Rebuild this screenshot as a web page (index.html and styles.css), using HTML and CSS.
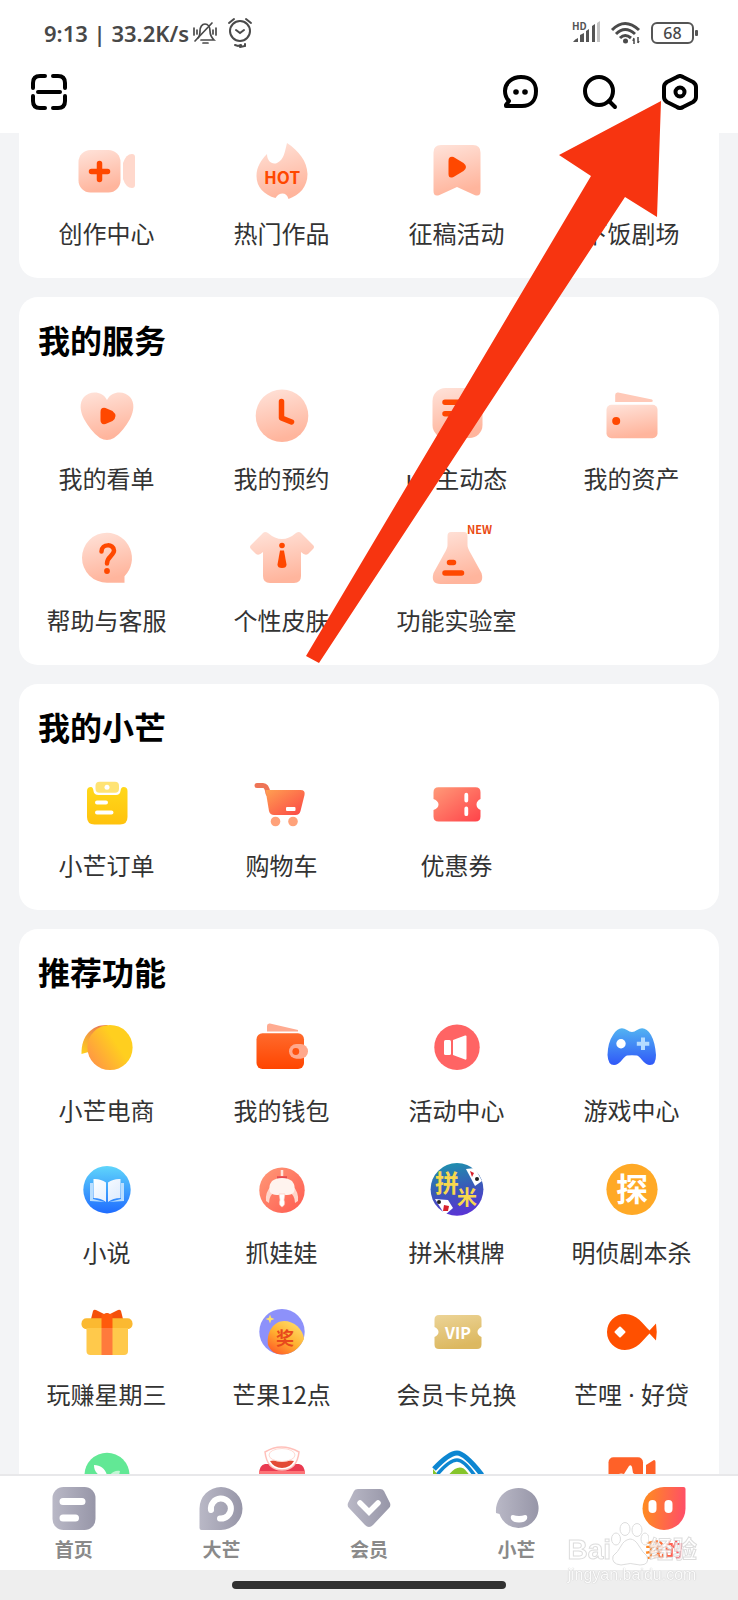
FILE: index.html
```html
<!DOCTYPE html>
<html lang="zh-CN">
<head>
<meta charset="utf-8">
<meta name="viewport" content="width=device-width, initial-scale=1">
<title>我的</title>
<link rel="stylesheet" href="styles.css">
</head>
<body>
<svg class="defs" aria-hidden="true">
  <defs>
    <linearGradient id="peach" x1="0" y1="0" x2="0.25" y2="1"><stop offset="0" stop-color="#ffe3da"/><stop offset="1" stop-color="#ffb59d"/></linearGradient>
    <linearGradient id="yellow" x1="0" y1="0" x2="0" y2="1"><stop offset="0" stop-color="#ffd81a"/><stop offset="1" stop-color="#ffc20d"/></linearGradient>
    <linearGradient id="cart" x1="0" y1="0" x2="1" y2="1"><stop offset="0" stop-color="#ffa052"/><stop offset="1" stop-color="#fb4545"/></linearGradient>
    <linearGradient id="coupon" x1="0" y1="0" x2="1" y2="1"><stop offset="0" stop-color="#ff9a78"/><stop offset="1" stop-color="#ff4249"/></linearGradient>
    <linearGradient id="mango" x1="0" y1="1" x2="0.9" y2="0.4"><stop offset="0" stop-color="#ff8a4c"/><stop offset="0.8" stop-color="#ffcf1f"/></linearGradient>
    <linearGradient id="beak" x1="0.6" y1="0" x2="0" y2="1"><stop offset="0" stop-color="#ea7c52"/><stop offset="1" stop-color="#ffd21c"/></linearGradient>
    <linearGradient id="wallet" x1="0" y1="0" x2="0" y2="1"><stop offset="0" stop-color="#ff6a2c"/><stop offset="1" stop-color="#ff4500"/></linearGradient>
    <linearGradient id="pad" x1="0" y1="0" x2="0" y2="1"><stop offset="0" stop-color="#52b3f2"/><stop offset="1" stop-color="#3058f8"/></linearGradient>
    <linearGradient id="book" x1="0" y1="0" x2="0" y2="1"><stop offset="0" stop-color="#5fd5fb"/><stop offset="1" stop-color="#1f6cff"/></linearGradient>
    <linearGradient id="page" x1="0" y1="0" x2="1" y2="1"><stop offset="0" stop-color="#fff"/><stop offset="1" stop-color="#dbeafe"/></linearGradient>
    <linearGradient id="claw" x1="0" y1="0" x2="1" y2="1"><stop offset="0" stop-color="#ff9a78"/><stop offset="1" stop-color="#ff5a50"/></linearGradient>
    <linearGradient id="chess" x1="0.4" y1="0" x2="0.6" y2="1"><stop offset="0" stop-color="#1f8fae"/><stop offset="0.5" stop-color="#3a58b8"/><stop offset="1" stop-color="#5b33d6"/></linearGradient>
    <linearGradient id="prize" x1="0.8" y1="0" x2="0.1" y2="1"><stop offset="0" stop-color="#ffdf6a"/><stop offset="0.5" stop-color="#ffb030"/><stop offset="1" stop-color="#ff5426"/></linearGradient>
    <linearGradient id="gold" x1="0" y1="0" x2="0.3" y2="1"><stop offset="0" stop-color="#ecd497"/><stop offset="1" stop-color="#dcb860"/></linearGradient>
    <linearGradient id="grey" x1="0" y1="0" x2="1" y2="0"><stop offset="0" stop-color="#b9b8c6"/><stop offset="1" stop-color="#9796a8"/></linearGradient>
    <linearGradient id="hot" x1="0" y1="0.4" x2="1" y2="0.5"><stop offset="0" stop-color="#ff8c1f"/><stop offset="1" stop-color="#ff4e68"/></linearGradient>
  </defs>
</svg>

<div class="status">
  <div class="status-side">
    <span class="status-text">9:13 | 33.2K/s</span>
    <svg class="bell" viewBox="0 0 24 24"><g fill="none" stroke="#4a4a4a" stroke-width="1.7" stroke-linecap="round"><path d="M5 17c2-2 2-4 2-7 0-4 2-7 5-7s5 3 5 7c0 4 1 6 4 9H8"/><path d="M2 20 19 2M10 22h5M1 7v7M4 9v4M20 9v4M23 7v7"/></g></svg>
    <svg class="alarm" viewBox="0 0 26 32"><g fill="none" stroke="#4a4a4a" stroke-width="2" stroke-linecap="round"><circle cx="13" cy="14" r="10"/><path d="m9 13 4 3 4-3M2 6l5-4M24 6l-5-4"/><path d="M8 28l3 1 3-1M13 30l5-1 0-2" stroke-width="2"/></g></svg>
  </div>
  <div class="status-side">
    <svg class="signal" viewBox="0 0 30 24"><text class="hd" x="1" y="9">HD</text><g fill="#555"><path d="M2 21q2-3 5-4v4zM9 14l4-2v9H9zM15 10l3-2v13h-3zM21 5l3-2v18h-3z"/><path fill="#c4c4c4" d="M26 2l3-2v21h-3z"/></g></svg>
    <svg class="wifi" viewBox="0 0 30 24"><g fill="none" stroke="#4a4a4a" stroke-width="3"><path d="M1 9q13-13 27 0M5 13q9-9 19 0M9 17q5-5 11 0"/></g><circle cx="14.500" cy="20" r="2.500" fill="#4a4a4a"/><path d="M23 18v5M27 16v6M22 20l1-3M27 22l1-2" stroke="#4a4a4a" stroke-width="1.500"/></svg>
    <span class="battery">68</span>
  </div>
</div>

<header class="toolbar">
  <button class="tool" type="button" aria-label="扫一扫"><svg viewBox="0 0 36 36"><path d="M2 14V9q0-7 7-7h5M22 2h5q7 0 7 7v5M34 22v5q0 7-7 7h-5M14 34H9q-7 0-7-7v-5M7 18h22"/></svg></button>
  <div class="tools">
    <button class="tool" type="button" aria-label="消息"><svg viewBox="0 0 36 36"><path d="M4 32h16c9 0 14-6 14-15C34 8 28 3 19 3S3 9 3 17c0 4 1 7 4 10l-3 4z"/><circle class="dot" cx="14" cy="18" r="2.800"/><circle class="dot" cx="23" cy="18" r="2.800"/></svg></button>
    <button class="tool" type="button" aria-label="搜索"><svg viewBox="0 0 36 36"><circle cx="17" cy="17" r="14"/><path d="m27 27 6 6"/></svg></button>
    <button class="tool" type="button" aria-label="设置"><svg viewBox="0 0 36 36"><path d="M15 3q3-2 6 0l10 5q3 2 3 5v10q0 3-3 5l-10 5q-3 2-6 0L5 28q-3-2-3-5V13q0-3 3-5z"/><circle cx="18" cy="18" r="4.500"/></svg></button>
  </div>
</header>

<main class="content">
  <section class="card card-first">
    <div class="grid">
      <a class="item" href="#"><svg viewBox="0 0 60 60"><rect x="1.500" y="9" width="42" height="42.500" rx="12" fill="url(#peach)"/><path d="M46 22q3-9 9-9 3 0 3 3v28q0 3-3 3-6 0-9-9z" fill="#ffd8cc"/><path d="M22.500 22.500v16M14.500 30.500h16" class="mark"/></svg><span>创作中心</span></a>
      <a class="item" href="#"><svg viewBox="0 0 60 60"><path d="M15 13c0 7 5 11 10 9 7-3 8-12 10-20 12 8 20 18 20.500 31 0 13-8 21-19 25-2-7-9-7-13-1C12 54 4.500 46 4.500 35 4.500 26 9 19 15 13z" fill="url(#peach)"/><text class="hot-text" x="30" y="43">HOT</text></svg><span>热门作品</span></a>
      <a class="item" href="#"><svg viewBox="0 0 60 60"><path d="M14 4h32q7.500 0 7.500 7.500V50q0 6-6 4L30 46 12.500 54q-6 2-6-4V11.500Q6.500 4 14 4z" fill="url(#peach)"/><path d="M21.500 20q0-5 5-4l10 6q5 4 0 8l-10 6q-5 2-5-3z" fill="#ff4800"/></svg><span>征稿活动</span></a>
      <a class="item" href="#"><svg viewBox="0 0 60 60"></svg><span>下饭剧场</span></a>
    </div>
  </section>

  <section class="card">
    <h2>我的服务</h2>
    <div class="grid">
      <a class="item" href="#"><svg viewBox="0 0 60 60"><path d="M30 14C35 4 48 5 53 11c5 6 4 14 0 22-4 7-9 14-16 19q-7 4-14 0C16 47 11 40 7 33 3 25 2 17 7 11 12 5 25 4 30 14z" fill="url(#peach)"/><path d="M23.500 26q0-5 5-4l7 3q6 5 0 10l-7 3q-5 1-5-4z" fill="#ff4800"/></svg><span>我的看单</span></a>
      <a class="item" href="#"><svg viewBox="0 0 60 60"><circle cx="30" cy="29.700" r="26.300" fill="url(#peach)"/><path class="mark" d="M29.500 15.500V32l10 4"/></svg><span>我的预约</span></a>
      <a class="item" href="#"><svg viewBox="0 0 60 60"><rect x="5.500" y="2" width="50" height="50" rx="13" fill="url(#peach)"/><path class="mark" d="M18 16.300h22M18 27.700h22"/></svg><span>up主动态</span></a>
      <a class="item" href="#"><svg viewBox="0 0 60 60"><path d="M13.200 9q0-3 3-2.500L50 13.500q2 2-1 2.500H13.200z" fill="#ffc9b8"/><rect x="4.500" y="18.700" width="51" height="33.600" rx="5" fill="url(#peach)"/><circle cx="14.200" cy="35" r="4" fill="#ff4800"/></svg><span>我的资产</span></a>
      <a class="item" href="#"><svg viewBox="0 0 60 60"><path d="M30 4.700a25.500 25.500 0 0 1 17.500 43.500v6.500H30a25 25 0 0 1 0-50z" fill="url(#peach)"/><path d="M24.500 23.500c0-8 12.500-8 12.500-1 0 5-7 6-7 13" fill="none" stroke="#ff4800" stroke-width="4.500" stroke-linecap="round"/><circle cx="30" cy="43" r="2.900" fill="#ff4800"/></svg><span>帮助与客服</span></a>
      <a class="item" href="#"><svg viewBox="0 0 60 60"><path d="M11 5q2-2 5 0 14 12 28 0 3-2 5 0l12 12q2 2 0 4l-5 5q-3 2-7-2v24q0 7-7 7H18q-7 0-7-7V24q-4 4-7 2l-5-5q-2-2 0-4z" fill="url(#peach)"/><circle cx="30" cy="17.500" r="2.800" fill="#ff4800"/><path d="M28 22.500h4l2.500 14q0 3.500-4.500 3.500t-4.500-3.500z" fill="#ff4800"/></svg><span>个性皮肤</span></a>
      <a class="item" href="#"><svg viewBox="0 0 60 60"><path d="M24 4h13q3.500 0 3.500 4v9q0 3 3 8l11 20q3 11-7 11h-34q-10 0-7-11l11-20q3-5 3-8V8q0-4 3.500-4z" fill="url(#peach)"/><path class="mark" d="M22.500 34.500h4M18 45h16.500"/><text class="new-text" x="40" y="6">NEW</text></svg><span>功能实验室</span></a>
    </div>
  </section>

  <section class="card">
    <h2>我的小芒</h2>
    <div class="grid">
      <a class="item" href="#"><svg viewBox="0 0 60 60"><path d="M10 18q0-4 4-4 2 0 2.500 4t5 4h17.500q4 0 4.500-4t3-4q4 0 4 4v26q0 7.500-7.500 7.500H17.500Q10 51.500 10 44z" fill="url(#yellow)"/><rect x="18.500" y="8.700" width="23.500" height="11" rx="4" fill="#ffe373"/><circle cx="30" cy="14.300" r="2.500" fill="#fff"/><path d="M20 29.500h9M20 39.500h14.500" stroke="#fff" stroke-width="4" stroke-linecap="round"/></svg><span>小芒订单</span></a>
      <a class="item" href="#"><svg viewBox="0 0 60 60"><path d="M5 12.500h6q4 0 5 8" fill="none" stroke="#ee7456" stroke-width="5" stroke-linecap="round"/><path d="M13.500 17h35q5 0 4 5l-4 16q-1 4-5 4H22q-4 0-5-4z" fill="url(#cart)"/><rect x="34" y="34" width="9.500" height="4" rx="1" fill="#fff"/><circle cx="23.500" cy="48.500" r="4.800" fill="#ffa27a"/><circle cx="41" cy="48.500" r="4.800" fill="#ffa27a"/></svg><span>购物车</span></a>
      <a class="item" href="#"><svg viewBox="0 0 60 60"><path d="M11.500 14.300h37q5 0 5 5V26q-4 2-4 5.500t4 5.500v6.500q0 5-5 5h-37q-5 0-5-5V37q5-2 5-5.500T6.500 26v-6.700q0-5 5-5z" fill="url(#coupon)"/><path d="M39.300 21.700v5.800M39.300 35.500v5.700" stroke="#fff" stroke-width="3.800" stroke-linecap="round"/></svg><span>优惠券</span></a>
    </div>
  </section>

  <section class="card card-last">
    <h2>推荐功能</h2>
    <div class="grid">
      <a class="item" href="#"><svg viewBox="0 0 60 60"><path d="M31 7C16 6 4 17 4.500 36l7-2z" fill="url(#beak)"/><circle cx="33" cy="29.500" r="22.600" fill="url(#mango)"/></svg><span>小芒电商</span></a>
      <a class="item" href="#"><svg viewBox="0 0 60 60"><path d="M15 8q0-3 3-2.500L46 12v1.500H15z" fill="#ffab91"/><rect x="4.500" y="15.300" width="47.500" height="35.700" rx="6" fill="url(#wallet)"/><rect x="37" y="26" width="19" height="14.700" rx="7.300" fill="#ffa88c"/><circle cx="43.800" cy="33.500" r="3.400" fill="#ff5310"/></svg><span>我的钱包</span></a>
      <a class="item" href="#"><svg viewBox="0 0 60 60"><circle cx="30" cy="29.300" r="22.700" fill="#ff6464"/><rect x="17" y="22" width="7" height="15" rx="1.500" fill="#fff"/><path d="M26 22l12-4.500q1.500-.5 1.500 1v22q0 1.500-1.500 1L26 37z" fill="#fff"/></svg><span>活动中心</span></a>
      <a class="item" href="#"><svg viewBox="0 0 60 60"><path d="M11 17q6-10 14-5 5 4 10 0 8-5 14 5 4 7 5 20 0 10-6 10-4 0-8-5-3-4-5-4.500-5-.500-10 0-2 .5-5 4.500-4 5-8 5-6 0-6.500-10Q6 24 11 17z" fill="url(#pad)"/><circle cx="19" cy="25.700" r="4.700" fill="#fff"/><path d="M41 19.500V32M34.800 25.700h12.500" stroke="#b5dcff" stroke-width="4"/></svg><span>游戏中心</span></a>
      <a class="item" href="#"><svg viewBox="0 0 60 60"><circle cx="30" cy="29.700" r="23.700" fill="url(#book)"/><path d="M13 23h3v16l12 3-15-1zM47 23h-3v16l-12 3 15-1z" fill="#b8deff"/><path d="M16.500 19q7-.500 12.500 3.500V42q-5-4-12.500-4zM43.500 19q-7-.5-12.500 3.500V42q5-4 12.500-4z" fill="url(#page)"/></svg><span>小说</span></a>
      <a class="item" href="#"><svg viewBox="0 0 60 60"><circle cx="30" cy="30.300" r="22.700" fill="url(#claw)"/><path d="M30 10v6" stroke="#ffe5dc" stroke-width="2.500"/><path d="M25 17.500h10" stroke="#e6484e" stroke-width="2.500"/><path d="M20 25q-7 7-6 16l3 2q0-8 6-11zM40 25q7 7 6 16l-3 2q0-8-6-11z" fill="#ffd5ca"/><path d="M20 21q4-3 10-3t10 3q4 5 2 11-2 3-7 3H25q-5 0-7-3-2-6 2-11z" fill="#fff3ee"/><path d="M27 34h6l-1 6q2 5-2 7-4-2-2-7z" fill="#fff" stroke="#ffc5b6" stroke-width=".6"/></svg><span>抓娃娃</span></a>
      <a class="item" href="#"><svg viewBox="0 0 60 60"><circle cx="30" cy="29.300" r="26.400" fill="url(#chess)"/><path d="M39 9l9-1 7 13-7 5z" fill="#fff"/><path d="M43 11l4 2-2 4z" fill="#d8202c"/><circle cx="50" cy="19" r="2" fill="#222"/><path d="M8 39l13 1 5 8-8 7z" fill="#fff"/><path d="M17 45l5 1-1 5h-5z" fill="#d8202c"/><circle cx="12" cy="42" r="2" fill="#222"/><text class="logo-text yellow-text" x="20" y="32">拼</text><text class="logo-text yellow-text small-text" x="40" y="45">米</text></svg><span>拼米棋牌</span></a>
      <a class="item" href="#"><svg viewBox="0 0 60 60"><circle cx="30" cy="29.300" r="25.600" fill="#ffa926"/><text class="logo-text tan-text" x="30" y="41">探</text></svg><span>明侦剧本杀</span></a>
      <a class="item" href="#"><svg viewBox="0 0 60 60"><path d="M14 17l2-8q1-2 3-1l8 4q3-2 6 0l8-4q2-1 3 1l2 8z" fill="#f4500a"/><rect x="4.500" y="16.300" width="51" height="11" rx="5" fill="#fbb931"/><path d="M9.500 26H51v23q0 4-4 4H13.500q-4 0-4-4z" fill="#ffc94b"/><path d="M24.500 12h11v14h-11z" fill="#ff5a0c"/><path d="M24.500 26h11v27h-11z" fill="#ff7a3c"/></svg><span>玩赚星期三</span></a>
      <a class="item" href="#"><svg viewBox="0 0 60 60"><circle cx="30" cy="29.700" r="22.700" fill="#8d91fa"/><path d="M16 43C14 30 22 19 32 19s19 8 20 18C47 48 38 52.500 30 52.500S18 48 16 43z" fill="url(#prize)"/><path d="M18 12.500l1.200 3.300 3.300 1.200-3.300 1.200L18 21.500l-1.200-3.300-3.300-1.200 3.300-1.200z" fill="#ffe06a"/><text class="logo-text prize-text" x="33" y="43">奖</text></svg><span>芒果12点</span></a>
      <a class="item" href="#"><svg viewBox="0 0 60 60"><path d="M12 13h38q4.500 0 4.500 4.500V25q-4 2-4 5t4 5v7.500q0 4.500-4.500 4.500H12q-4.500 0-4.500-4.500V35q4-2 4-5t-4-5v-7.500Q7.500 13 12 13z" fill="url(#gold)"/><text class="vip-text" x="31" y="37">VIP</text></svg><span>会员卡兑换</span></a>
      <a class="item" href="#"><svg viewBox="0 0 60 60"><path d="M23 12c12 0 18 10 24.500 16.500L54 21.500q1.500 8.500 0 17L47.500 31.500C41 38 35 48 23 48a18 18 0 0 1 0-36z" fill="#ff5000"/><path d="M18 25.500l4.500 4.500-4.500 4.500-4.500-4.500z" fill="#fff" stroke="#fff" stroke-width="2" stroke-linejoin="round"/></svg><span>芒哩<span class="latin"> · </span>好贷</span></a>
      <a class="item" href="#"><svg viewBox="0 0 60 60"><circle cx="30" cy="30.200" r="22.500" fill="#62e895"/><path d="M17 20c7 0 11 4 13 10h-8c-4-3-5-6-5-10z" fill="#fff"/><path d="M33 30c2-3 6-5 10-4l-1 4z" fill="#c2f7d5"/></svg></a>
      <a class="item" href="#"><svg viewBox="0 0 60 60"><path d="M7 30q0-10 6-11h34q6 1 6 11z" fill="#ea3a50"/><path d="M7 26h46v6H7z" fill="#fd7477"/><path d="M13 7q16-10 34 0-2 18-17 18T13 7z" fill="#fff" stroke="#ffc0ba" stroke-width="1.500"/><path d="M18 16q12-2 24 0-4 7-12 7t-12-7z" fill="#e34a35"/><ellipse cx="30" cy="10" rx="13" ry="6.500" fill="#fff" stroke="#ffd9d2"/></svg></a>
      <a class="item" href="#"><svg viewBox="0 0 60 60"><g fill="none" stroke="#0d86d1"><path d="M7 24Q22 8 30 8t25 22" stroke-width="5"/><path d="M9 31Q22 15 30 15q7 0 18 16" stroke-width="3.500"/></g><path d="M20 32q12-16 20-5l5 6zM6 24l5 6-5 1z" fill="#86c52b"/></svg></a>
      <a class="item" href="#"><svg viewBox="0 0 60 60"><rect x="6.500" y="12.300" width="34.500" height="35" rx="5" fill="#ff6128"/><path d="M44 20l8-5q1.500 0 1.500 2v25H44z" fill="#ff6128"/><path d="M13 32q4-5 9-3l5-8q2-2 3 1l1 6 6 4z" fill="#fff"/></svg></a>
    </div>
  </section>
</main>

<nav class="tabs">
  <a class="tab" href="#"><svg viewBox="0 0 44 44"><rect x=".5" y="1" width="43" height="43" rx="11" fill="url(#grey)"/><path d="M11 15.500h19M11 32h12.500" stroke="#fff" stroke-width="7" stroke-linecap="round"/></svg><span>首页</span></a>
  <a class="tab" href="#"><svg viewBox="0 0 44 44"><path d="M22 1a21.500 21.500 0 0 1 0 43H2.500Q.500 44 .5 42V22.500A21.500 21.500 0 0 1 22 1z" fill="url(#grey)"/><path d="M12 24a10 10 0 1 1 9 8.500" fill="none" stroke="#fff" stroke-width="6" stroke-linecap="round"/></svg><span>大芒</span></a>
  <a class="tab" href="#"><svg viewBox="0 0 44 44"><path d="M11 3h22q3 0 4 2l6 12q1 3-1 5L26 39q-4 4-8 0L2 22q-2-2-1-5L7 5q1-2 4-2z" fill="url(#grey)"/><path d="M13 17l9 9 9-9" fill="none" stroke="#fff" stroke-width="5.500" stroke-linecap="round"/></svg><span>会员</span></a>
  <a class="tab" href="#"><svg viewBox="0 0 44 44"><path d="M23.500 2a20 20 0 1 1-19 26L1 27C0 14 9 2 23.500 2z" fill="url(#grey)"/><path d="M18 29q6 2 12 0 3 0 2 4-2 3.500-8 3.500t-8-3.500q-1-4 2-4z" fill="#fff"/></svg><span>小芒</span></a>
  <a class="tab active" href="#" aria-current="page"><svg viewBox="0 0 44 44"><path d="M22 1h19.500q2 0 2 2v19.500A21.500 21.500 0 1 1 22 1z" fill="url(#hot)"/><rect x="6.500" y="14" width="8" height="13" rx="4" fill="#fff"/><rect x="22.500" y="14" width="8" height="13" rx="4" fill="#fff"/></svg><span>我的</span></a>
</nav>
<div class="home-bar"><span></span></div>

<svg class="arrow" viewBox="0 0 356 563" aria-hidden="true"><path d="M355 1 253 55l32 21L0 556l13 7L319 97l32 20z" fill="#f73410"/></svg>

<div class="watermark">
  <div class="watermark-logo">
    <span>Bai</span>
    <svg viewBox="0 0 38 44"><g fill="#fff" stroke="#d4d4d4"><ellipse cx="5" cy="17" rx="4.500" ry="6"/><ellipse cx="14" cy="7" rx="5" ry="6.500"/><ellipse cx="26" cy="8" rx="5" ry="6.500"/><ellipse cx="34" cy="17" rx="4" ry="6"/><path d="M19 17q5 0 9 7t8 10q3 9-7 9-10-3-19 0-10-1-8-9 5-4 8-10t9-7z"/></g><text x="19" y="39">du</text></svg>
    <span class="watermark-name">经验</span>
  </div>
  <div class="watermark-url">jingyan.baidu.com</div>
</div>
</body>
</html>
```
FILE: styles.css
```css
* {
  box-sizing: border-box;
}

body {
  position: relative;
  display: flex;
  flex-direction: column;
  height: 100vh;
  margin: 0;
  overflow: hidden;
  background: #f3f4f6;
  color: #333;
  font-family: "Noto Sans CJK SC", "Noto Sans", sans-serif;
}

a {
  color: inherit;
  text-decoration: none;
}

.defs {
  position: absolute;
  width: 0;
  height: 0;
}

/* status bar */
.status {
  display: flex;
  flex: none;
  align-items: center;
  justify-content: space-between;
  height: 66px;
  padding: 0 40px 0 44px;
  background: #fff;
}

.status-side {
  display: flex;
  align-items: center;
  gap: 10px;
}

.status-text {
  margin-right: -6px;
  color: #484848;
  font-family: "Noto Sans", sans-serif;
  font-size: 22px;
  font-weight: 600;
  line-height: 30px;
}

.bell {
  width: 24px;
  height: 24px;
}

.alarm {
  width: 26px;
  height: 32px;
}

.signal,
.wifi {
  width: 30px;
  height: 24px;
  overflow: visible;
}

.hd {
  fill: #555;
  font-size: 10px;
  font-weight: 700;
}

.battery {
  position: relative;
  width: 43px;
  height: 22px;
  margin-right: 4px;
  border: 2px solid #555;
  border-radius: 6px;
  color: #484848;
  font-family: "Noto Sans", sans-serif;
  font-size: 16px;
  font-weight: 500;
  line-height: 18px;
  text-align: center;
}

.battery::after {
  position: absolute;
  top: 6px;
  right: -6px;
  width: 3px;
  height: 6px;
  border-radius: 1px;
  background: #555;
  content: "";
}

/* toolbar */
.toolbar {
  display: flex;
  flex: none;
  justify-content: space-between;
  height: 67px;
  padding: 8px 40px 0 31px;
  background: #fff;
}

.tools {
  display: flex;
  gap: 44px;
}

.tool {
  width: 36px;
  height: 36px;
  padding: 0;
  border: 0;
  background: none;
}

.tool svg {
  display: block;
  fill: none;
  stroke: #000;
  stroke-width: 4;
  stroke-linecap: round;
  stroke-linejoin: round;
}

.tool .dot {
  fill: #000;
  stroke: none;
}

/* cards */
.content {
  display: flex;
  flex: 1;
  flex-direction: column;
  gap: 19px;
  min-height: 0;
  padding: 0 19px;
  overflow: hidden;
}

.card {
  flex: none;
  padding: 24px 0 31px;
  border-radius: 19px;
  background: #fff;
}

.card-first {
  padding-top: 8px;
  border-radius: 0 0 19px 19px;
}

.card h2 {
  margin: 0 19px 29px;
  color: #000;
  font-size: 32px;
  font-weight: 700;
  line-height: 36px;
}

.grid {
  display: grid;
  grid-template-columns: repeat(4, 1fr);
  row-gap: 36px;
}

.item {
  display: flex;
  flex-direction: column;
  align-items: center;
  gap: 18px;
  font-size: 24px;
  line-height: 28px;
  white-space: nowrap;
}

.item svg {
  width: 60px;
  height: 60px;
  overflow: visible;
}

.latin {
  font-family: "Noto Sans", sans-serif;
}

.mark {
  fill: none;
  stroke: #ff4800;
  stroke-width: 5.5px;
  stroke-linecap: round;
  stroke-linejoin: round;
}

.hot-text,
.new-text,
.vip-text,
.logo-text {
  font-weight: 700;
}

.hot-text {
  fill: #ff4800;
  font-size: 17px;
  text-anchor: middle;
}

.new-text {
  fill: #ea4a12;
  font-size: 11px;
}

.vip-text {
  fill: #fff;
  font-size: 16px;
  text-anchor: middle;
}

.logo-text {
  text-anchor: middle;
}

.yellow-text {
  fill: #f8d84e;
  font-size: 24px;
}

.small-text {
  font-size: 20px;
}

.tan-text {
  fill: #fff;
  font-size: 32px;
}

.prize-text {
  fill: #e8481c;
  font-size: 18px;
}

/* bottom tabs */
.tabs {
  display: grid;
  flex: none;
  grid-template-columns: repeat(5, 1fr);
  height: 96px;
  padding-top: 10px;
  border-top: 2px solid #e8e8ea;
  background: #fff;
}

.tab {
  display: flex;
  flex-direction: column;
  align-items: center;
  gap: 7px;
  color: #8a8a8a;
  font-size: 19px;
  font-weight: 700;
  line-height: 24px;
}

.tab svg {
  width: 44px;
  height: 44px;
}

.active span {
  background: linear-gradient(90deg, #ff8c1f, #ff4e68);
  background-clip: text;
  -webkit-background-clip: text;
  color: transparent;
}

.home-bar {
  display: flex;
  flex: none;
  align-items: center;
  justify-content: center;
  height: 30px;
  background: #eee;
}

.home-bar span {
  width: 37%;
  height: 8px;
  border-radius: 4px;
  background: #303030;
}

/* overlays */
.arrow {
  position: absolute;
  top: 100px;
  right: 76px;
  width: 356px;
  height: 563px;
  pointer-events: none;
}

.watermark {
  position: absolute;
  right: 41px;
  bottom: 16px;
  color: #fff;
  opacity: 0.8;
  pointer-events: none;
}

.watermark-logo {
  display: flex;
  align-items: flex-end;
  font-family: "Liberation Sans", "Noto Sans CJK SC", sans-serif;
  font-size: 28px;
  font-weight: 700;
  line-height: 32px;
  -webkit-text-stroke: 1px #d4d4d4;
}

.watermark-logo svg {
  width: 38px;
  height: 44px;
}

.watermark-logo text {
  fill: #fff;
  font-size: 16px;
  text-anchor: middle;
}

.watermark-name {
  font-size: 24px;
}

.watermark-url {
  font-family: "Liberation Sans", sans-serif;
  font-size: 16px;
  line-height: 18px;
  text-shadow: 0 0 1px #bbb, 0 0 1px #bbb;
}
```
